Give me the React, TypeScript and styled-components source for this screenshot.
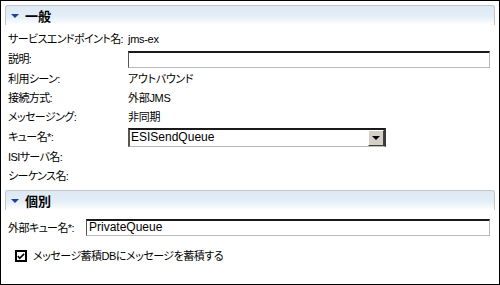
import React from 'react'
import styled, { createGlobalStyle } from 'styled-components'

const GlobalStyle = createGlobalStyle`
    html, body {
        margin: 0;
        padding: 0;
        background: #ffffff;
    }
    * {
        box-sizing: border-box;
    }
`

const commonRows = [
    { label: 'サービスエンドポイント名:', value: 'jms-ex' },
    { label: '説明:', input: '' },
    { label: '利用シーン:', value: 'アウトバウンド' },
    { label: '接続方式:', value: '外部JMS' },
    { label: 'メッセージング:', value: '非同期' },
    { label: 'キュー名*:', combo: 'ESISendQueue' },
    { label: 'ISIサーバ名:', value: '' },
    { label: 'シーケンス名:', value: '' },
]

function App() {
    return (
        <React.Fragment>
            <GlobalStyle />
            <Frame>
                <SectionHeader>
                    <Arrow />
                    <Title>一般</Title>
                </SectionHeader>
                <FormGrid>
                    {commonRows.map((row) => (
                        <Row key={row.label} tall={row.input !== undefined || row.combo !== undefined}>
                            <Label>{row.label}</Label>
                            {row.input !== undefined && <TextBox>{row.input}</TextBox>}
                            {row.combo !== undefined && (
                                <Combo>
                                    <ComboText>{row.combo}</ComboText>
                                    <ComboButton>
                                        <ComboArrow />
                                    </ComboButton>
                                </Combo>
                            )}
                            {row.input === undefined && row.combo === undefined && <Value>{row.value}</Value>}
                        </Row>
                    ))}
                </FormGrid>

                <SectionHeader>
                    <Arrow />
                    <Title>個別</Title>
                </SectionHeader>
                <InlineRow>
                    <Label>外部キュー名*:</Label>
                    <TextBox>PrivateQueue</TextBox>
                </InlineRow>
                <CheckRow>
                    <CheckBox>
                        <svg width="9" height="9" viewBox="0 0 9 9">
                            <path d="M1 4 L3 6.5 L8 1.5" stroke="#000" strokeWidth="1.8" fill="none" />
                        </svg>
                    </CheckBox>
                    <CheckLabel>メッセージ蓄積DBにメッセージを蓄積する</CheckLabel>
                </CheckRow>
            </Frame>
        </React.Fragment>
    )
}

export default App

const Frame = styled.div`
    width: 500px;
    height: 285px;
    border: 1px solid #000;
    padding: 4px 4px 0 4px;
    background: #fff;
    font-family: "Liberation Sans", "Noto Sans CJK JP", sans-serif;
    font-size: 11px;
    font-feature-settings: "palt";
    letter-spacing: -0.3px;
    color: #000;
    overflow: hidden;
`

const SectionHeader = styled.div`
    height: 20px;
    display: flex;
    align-items: center;
    padding-left: 5px;
    border: 1px solid #c6c6c6;
    border-bottom: none;
    border-radius: 3px 3px 0 0;
    background: linear-gradient(to bottom, #dde9f4 0%, #e4eef7 55%, #ffffff 100%);
`

const Arrow = styled.span`
    width: 0;
    height: 0;
    border-left: 4px solid transparent;
    border-right: 4px solid transparent;
    border-top: 4px solid #1f3f9a;
    margin-right: 6px;
    margin-top: 1px;
`

const Title = styled.span`
    font-weight: bold;
    font-size: 13px;
    letter-spacing: 0;
    color: #000;
`

const FormGrid = styled.div`
    display: flex;
    flex-direction: column;
    padding: 5px 5px 4px 3px;
`

const Row = styled.div<{ tall?: boolean }>`
    display: grid;
    grid-template-columns: 120px 1fr;
    align-items: center;
    height: ${(p) => (p.tall ? '20px' : '18px')};
    margin-bottom: 1px;
`

const Label = styled.span`
    white-space: nowrap;
    line-height: 14px;
    letter-spacing: -0.6px;
`

const Value = styled.span`
    line-height: 14px;
`

const TextBox = styled.div`
    height: 17px;
    border-style: solid;
    border-width: 2px 1px 1px 1px;
    border-color: #1a1a1a #b8b8b8 #b8b8b8 #555;
    background: #fff;
    padding: 0 2px;
    line-height: 13px;
    font-size: 12px;
    letter-spacing: 0;
`

const Combo = styled.div`
    width: 258px;
    height: 19px;
    display: flex;
    border-style: solid;
    border-width: 2px 2px 1px 2px;
    border-color: #1a1a1a #3a3a3a #b8b8b8 #555;
    background: #fff;
`

const ComboText = styled.span`
    flex: 1;
    padding-left: 1px;
    line-height: 15px;
    font-size: 12px;
    letter-spacing: 0;
`

const ComboButton = styled.div`
    width: 16px;
    display: flex;
    align-items: center;
    justify-content: center;
    background: #d4d0c8;
    border-style: solid;
    border-width: 1px;
    border-color: #fff #404040 #404040 #fff;
`

const ComboArrow = styled.span`
    width: 0;
    height: 0;
    border-left: 4px solid transparent;
    border-right: 4px solid transparent;
    border-top: 4px solid #000;
`

const InlineRow = styled.div`
    display: grid;
    grid-template-columns: 78px 1fr;
    align-items: center;
    padding: 9px 5px 0 3px;
`

const CheckRow = styled.div`
    display: flex;
    align-items: center;
    gap: 6px;
    padding: 13px 0 0 10px;
`

const CheckBox = styled.div`
    width: 12px;
    height: 12px;
    border: 2px solid #000;
    display: flex;
    align-items: center;
    justify-content: center;
    background: #fff;
`

const CheckLabel = styled.span`
    line-height: 14px;
    letter-spacing: -0.5px;
`
